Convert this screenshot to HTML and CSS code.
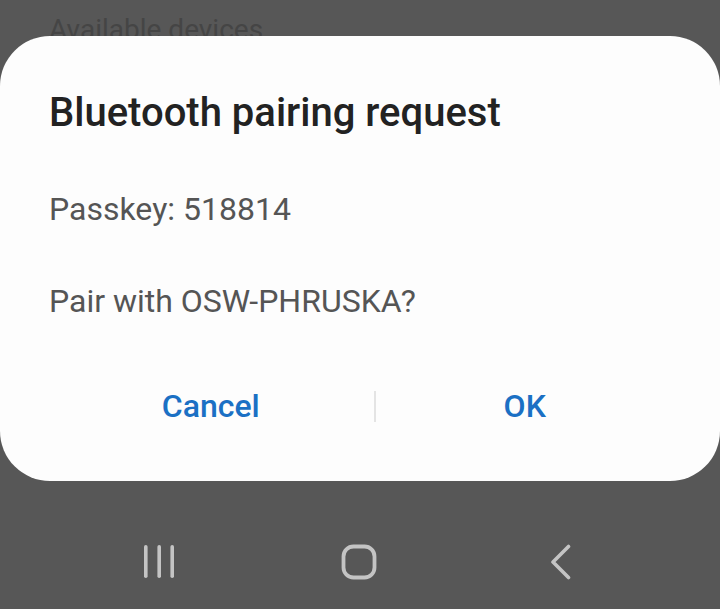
FILE: index.html
```html
<!DOCTYPE html>
<html lang="en">
  <head>
    <meta charset="UTF-8" />
    <meta name="viewport" content="width=device-width, initial-scale=1.0" />
    <title>Bluetooth pairing request</title>
    <link rel="stylesheet" href="styles.css">
  </head>
  <body>
    <div class="screen">
      <div class="behind">Available devices</div>

      <div class="dialog">
        <h2 class="dialog-title">Bluetooth pairing request</h2>
        <p class="dialog-text passkey">Passkey: 518814</p>
        <p class="dialog-text">Pair with OSW-PHRUSKA?</p>
        <div class="dialog-buttons">
          <button class="btn btn-cancel">Cancel</button>
          <span class="divider"></span>
          <button class="btn btn-ok">OK</button>
        </div>
      </div>

      <div class="navbar">
        <svg class="nav-icon" width="34" height="36" viewBox="0 0 34 36">
          <rect x="2" y="1" width="3.6" height="33" rx="1.8" fill="#c4c4c4" />
          <rect x="15.4" y="1" width="3.6" height="33" rx="1.8" fill="#c4c4c4" />
          <rect x="28.4" y="1" width="3.6" height="33" rx="1.8" fill="#c4c4c4" />
        </svg>
        <svg class="nav-icon" width="36" height="36" viewBox="0 0 36 36">
          <rect x="2.5" y="2.5" width="31" height="31" rx="10" fill="none" stroke="#c4c4c4" stroke-width="3.8" />
        </svg>
        <svg class="nav-icon" width="24" height="36" viewBox="0 0 24 36">
          <path d="M19.5 2.5 L4 18 L19.5 33.5" fill="none" stroke="#c4c4c4" stroke-width="3.6" stroke-linecap="round" stroke-linejoin="round" />
        </svg>
      </div>
    </div>
  </body>
</html>
```

FILE: styles.css
```css
body {
  margin: 0;
  background: #575757;
  font-family: Roboto, "Liberation Sans", sans-serif;
}
.screen {
  width: 720px;
  height: 609px;
  overflow: hidden;
  display: flex;
  flex-direction: column;
}
.behind {
  height: 36px;
  padding-left: 49px;
  font-size: 28px;
  line-height: 60px;
  color: #454545;
  overflow: hidden;
}
.dialog {
  background: #fdfdfd;
  border-radius: 50px;
  height: 445px;
  box-sizing: border-box;
  padding: 52px 49px 0;
  display: flex;
  flex-direction: column;
}
.dialog-title {
  margin: 0;
  font-size: 40px;
  font-weight: 500;
  line-height: 50px;
  color: #222;
}
.dialog-text {
  margin: 0;
  font-size: 32px;
  line-height: 40px;
  color: #555;
}
.passkey {
  margin-top: 51px;
  margin-bottom: 52px;
}
.dialog-buttons {
  display: flex;
  align-items: center;
  margin: 63px -2px 0;
}
.btn {
  background: none;
  border: 0;
  padding: 0;
  font-family: inherit;
  font-size: 32px;
  font-weight: 500;
  color: #1b70c4;
  line-height: 44px;
  cursor: pointer;
}
.btn-cancel {
  width: 328px;
}
.btn-ok {
  width: 297px;
}
.divider {
  width: 2px;
  height: 31px;
  background: #e4e4e4;
}
.navbar {
  display: flex;
  align-items: flex-start;
  height: 128px;
  box-sizing: border-box;
  padding-top: 63px;
}
.nav-icon {
  display: block;
}
.navbar .nav-icon:nth-child(1) {
  margin-left: 142px;
}
.navbar .nav-icon:nth-child(2) {
  margin-left: 165px;
}
.navbar .nav-icon:nth-child(3) {
  margin-left: 172px;
}
```
